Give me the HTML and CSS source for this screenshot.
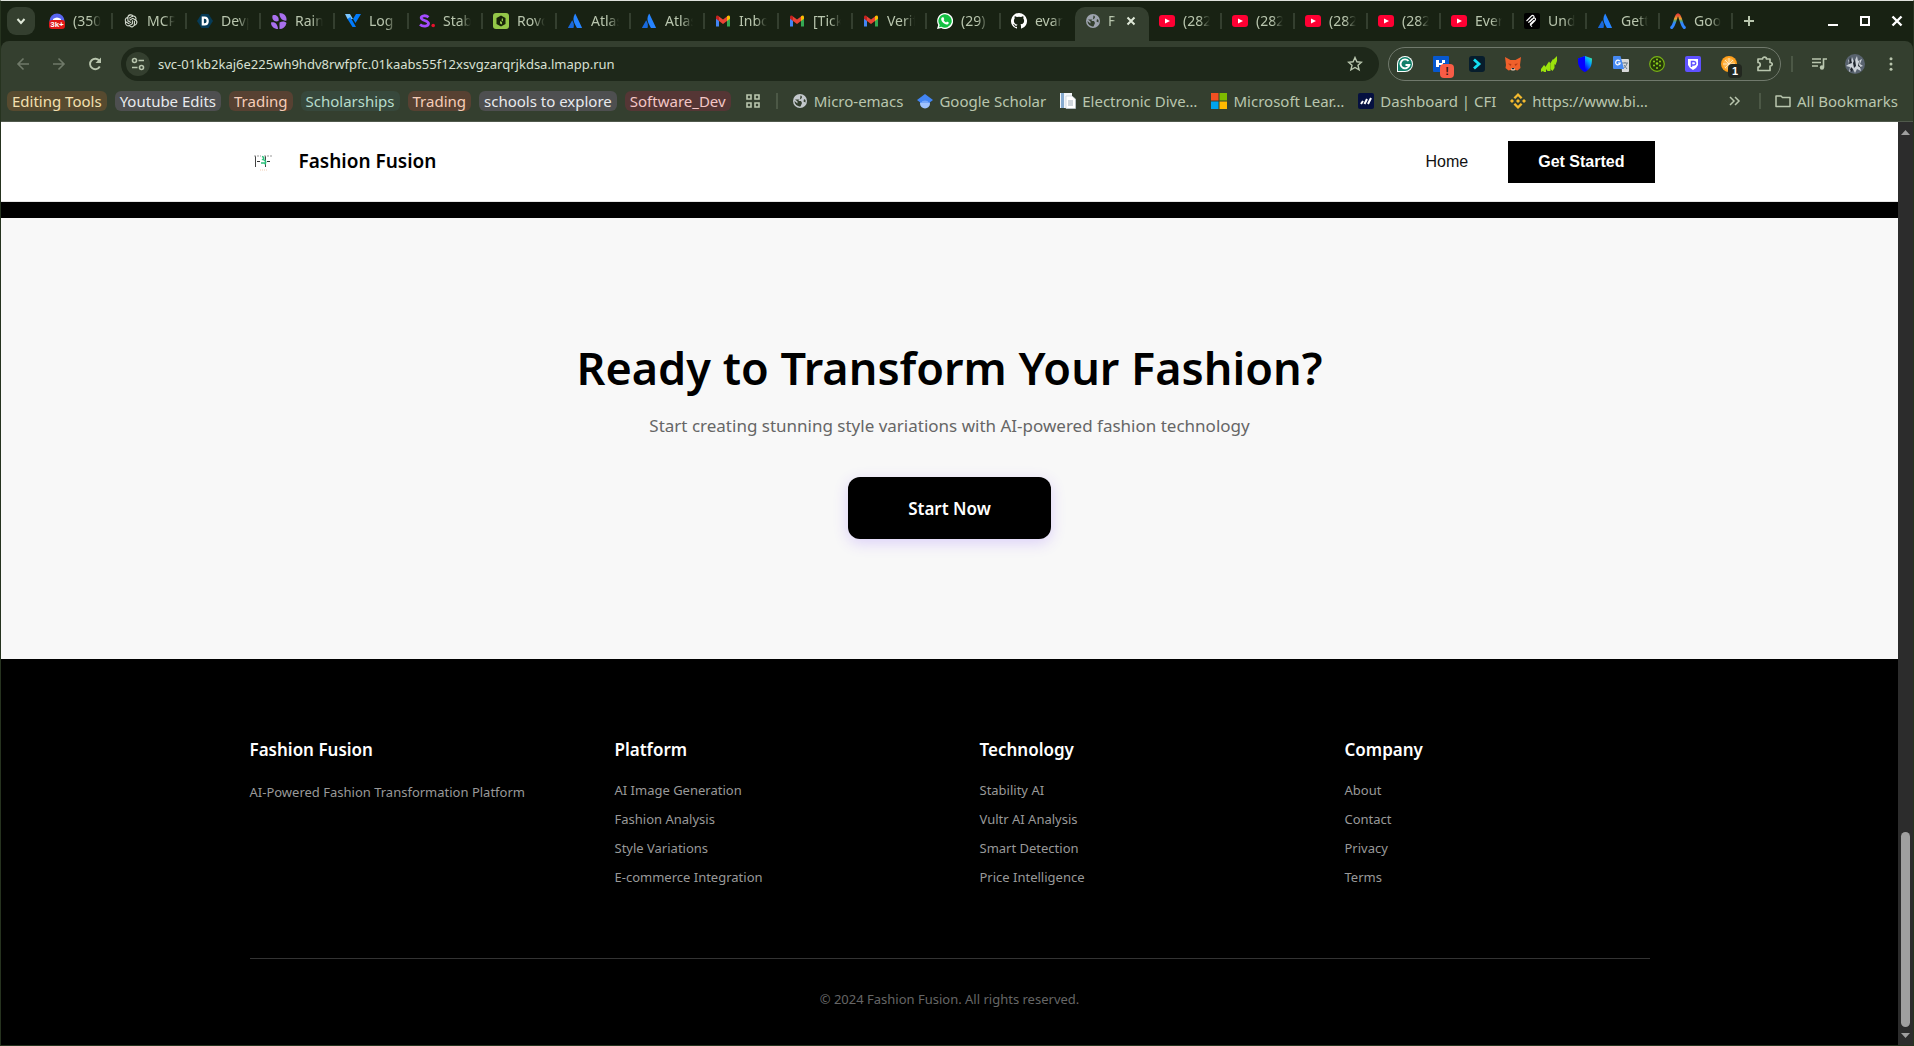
FILE: index.html
```html
<!DOCTYPE html>
<html lang="en">
<head>
<meta charset="utf-8">
<meta name="viewport" content="width=device-width, initial-scale=1">
<title>Fashion Fusion</title>
<link rel="stylesheet" href="styles.css">
</head>
<body>
<svg class="sprite" aria-hidden="true">
  <symbol id="atlassian" viewBox="0 0 16 16"><path fill="#1868db" d="M5.200 7.200 1.100 14.400c-.2.4 0 .7.4.7h5c.8-2.600.5-5.500-1.300-7.900z"/><path fill="#2684ff" d="M8 .8C5.800 4.500 6.200 7.600 7.600 10.400l2.200 4.300c.1.300.4.400.6.400h4.100c.4 0 .6-.3.4-.7L8.500.9C8.300.6 8.100.6 8 .8z"/></symbol>
  <symbol id="gmail" viewBox="0 0 16 16"><path fill="#4285f4" d="M1 4v9.500h3V7z"/><path fill="#34a853" d="M12 7v6.500h3V4z"/><path fill="#ea4335" d="m4 3.500 4 3 4-3V8l-4 3-4-3z"/><path fill="#c5221f" d="M1 4c0-1.900 1.800-2 3-.8V8L1 5.700z"/><path fill="#fbbc04" d="M15 4c0-1.900-1.800-2-3-.8V8l3-2.300z"/></symbol>
  <symbol id="youtube" viewBox="0 0 16 16"><rect y="2" width="16" height="12" rx="3" fill="#ff0033"/><path fill="#fff" d="m6 5.500 5 2.500-5 2.500z"/></symbol>
  <symbol id="globe" viewBox="0 0 16 16"><circle cx="8" cy="8" r="7" fill="currentColor"/><path fill="#343f2f" d="M8.500 2.500c1 .3 1.500 1 1.500 1.800L9 6 7 6.500 6.500 8H9l1 2-1.500 3.500C5 13.500 2.500 11 2.500 8l3 2.500V8.500L3 6.500l5 .0zM12 6l1.500 1v2.500L11.500 8.500z"/></symbol>
</svg>

<div class="browser">
  <header class="chrome">
    <div class="tabstrip">
      <button class="tab-search" aria-label="Search tabs"><svg viewBox="0 0 16 16"><path d="m4.500 6 3.500 4 3.500-4" fill="none" stroke="currentColor" stroke-width="2"/></svg></button>
      <nav class="tabs" aria-label="Open tabs">
        <a class="tab" href="#"><svg viewBox="0 0 16 16"><circle cx="8" cy="8" r="7.500" fill="#5865f2"/><path fill="#fff" d="M4 6q4-3 8 0v2H4z"/><rect y="7" width="16" height="9" rx="3" fill="#e01818"/><text x="8" y="14" text-anchor="middle" class="count">3k+</text></svg><span>(350)</span></a>
        <a class="tab" href="#"><svg viewBox="-1 -1 18 18"><g fill="none" stroke="#d8dfd4" stroke-width="1.200"><path id="petal" d="M8 9.800 4.500 7.800V4.200C4.500 .5 9.500 .2 10.300 2.800M4.600 3.800C.8 4.400 .8 8.200 2.900 9.500L6.300 11.400"/><use href="#petal" transform="rotate(120 8 8)"/><use href="#petal" transform="rotate(240 8 8)"/></g></svg><span>MCP</span></a>
        <a class="tab" href="#"><svg viewBox="0 0 16 16"><path fill="#063b57" d="M4.500 1h7L16 8l-4.500 7h-7L0 8z"/><path fill="none" stroke="#fff" stroke-width="2.200" d="M5.800 4.600h1.700c2.100 0 3.200 1.200 3.200 3.400s-1.100 3.400-3.200 3.400H5.800z"/></svg><span>Devpost</span></a>
        <a class="tab" href="#"><svg viewBox="0 0 16 16" fill="#a970ee"><path d="M1.500 2.500C5 1 8.500 4 7.500 8 4 9.500.5 7 1.500 2.500z"/><path d="M8.500 0C13 0 16 3 15.500 7.500 12 8.500 8 5 8.500 0z"/><path d="M0 9.500c3-1 6.500.5 7 6.500-4 0-7-2.500-7-6.500z"/><path d="M8.500 9.500c2.500-1.500 5.500-1.500 7 .5-1 4-3.500 6-7 6z"/></svg><span>Raindrop</span></a>
        <a class="tab" href="#"><svg viewBox="0 0 16 16"><path fill="#7cc7ff" d="M0 1h5l3 5H2.500z"/><path fill="#007bfc" d="m2.500 6 2.800-2L11 14H7.500zM11 1h5l-5.500 9L8 6z"/></svg><span>Log i</span></a>
        <a class="tab" href="#"><svg viewBox="0 0 16 16"><path fill="none" stroke="#a34bff" stroke-width="2.800" d="M9.500 4.200C7 2 2 2.400 2.200 5c.2 3 7.300 2 7.300 5.600 0 3-5.700 3.400-8.500.9"/><circle cx="14.200" cy="12.500" r="1.800" fill="#e8112d"/></svg><span>Stabi</span></a>
        <a class="tab" href="#"><svg viewBox="0 0 16 16"><rect width="16" height="16" rx="3" fill="#94c748"/><path fill="#172309" d="M8 2.500 12.500 5v6L8 13.500 3.500 11V5z"/><path fill="#94c748" d="M7 5v3l2 1v2.500l-2-1v-2zm2 0 1 1v2.500L8.500 7.500z"/></svg><span>Rovo</span></a>
        <a class="tab" href="#"><svg><use href="#atlassian"/></svg><span>Atlas</span></a>
        <a class="tab" href="#"><svg><use href="#atlassian"/></svg><span>Atlas</span></a>
        <a class="tab" href="#"><svg><use href="#gmail"/></svg><span>Inbox</span></a>
        <a class="tab" href="#"><svg><use href="#gmail"/></svg><span>[Tick</span></a>
        <a class="tab" href="#"><svg><use href="#gmail"/></svg><span>Verify</span></a>
        <a class="tab" href="#"><svg viewBox="0 0 16 16"><path fill="#fff" d="M8 0a8 8 0 1 1-3.800 15L0 16l1.200-4A8 8 0 0 1 8 0z"/><path fill="#13c143" d="M8 1.300a6.700 6.700 0 1 1-3.500 12.400L2 14.300l.7-2.400A6.700 6.700 0 0 1 8 1.300z"/><path fill="#fff" d="M5.500 4.300h1l.8 1.900-.7.900c.6 1.200 1.400 1.900 2.500 2.300l.9-.9 1.800.9c0 1.500-1 2-2.100 2-2.800-.3-5.500-3-5.500-5.200 0-.8.500-1.600 1.300-1.900z"/></svg><span>(29)</span></a>
        <a class="tab" href="#"><svg viewBox="0 0 16 16"><path fill="#fff" d="M8 0a8 8 0 0 0-2.500 15.600c.4.100.5-.2.500-.4v-1.400c-2.200.5-2.700-1-2.700-1-.4-.9-.9-1.200-.9-1.200-.7-.5.100-.5.100-.5.800.1 1.200.8 1.200.8.700 1.200 1.900.9 2.300.7.100-.5.300-.9.500-1.100-1.800-.2-3.600-.9-3.600-4 0-.8.300-1.500.8-2.100 0-.2-.4-1 .1-2.100 0 0 .7-.2 2.200.8a8 8 0 0 1 4 0c1.500-1 2.200-.8 2.200-.8.500 1.100.1 1.900.1 2.100.5.600.8 1.300.8 2.100 0 3.100-1.900 3.700-3.700 4 .3.200.6.700.6 1.400v2.300c0 .2.100.5.500.4A8 8 0 0 0 8 0z"/></svg><span>evans</span></a>
        <a class="tab active" href="#" aria-current="page"><svg class="globe"><use href="#globe"/></svg><span>Fa</span><svg class="close" viewBox="0 0 16 16"><path d="m4.500 4.500 7 7m0-7-7 7" stroke="currentColor" stroke-width="2"/></svg></a>
        <a class="tab" href="#"><svg><use href="#youtube"/></svg><span>(282)</span></a>
        <a class="tab" href="#"><svg><use href="#youtube"/></svg><span>(282)</span></a>
        <a class="tab" href="#"><svg><use href="#youtube"/></svg><span>(282)</span></a>
        <a class="tab" href="#"><svg><use href="#youtube"/></svg><span>(282)</span></a>
        <a class="tab" href="#"><svg><use href="#youtube"/></svg><span>Every</span></a>
        <a class="tab" href="#"><svg viewBox="0 0 16 16"><rect width="16" height="16" rx="2" fill="#000"/><g fill="none" stroke="#fff" stroke-width="1.100"><path d="m2.500 8 5-5c1.500-1.500 3.500.5 2 2l-4 4m3.500-3.500c1.500-1.500 3.500.5 2 2l-4.500 4.500 1.500 1.700M4.300 9.700l4-4M6 11.500l4-4"/></g></svg><span>Under</span></a>
        <a class="tab" href="#"><svg><use href="#atlassian"/></svg><span>Getti</span></a>
        <a class="tab" href="#"><svg viewBox="0 0 16 16"><defs><linearGradient id="peak" x1="0" y1="0" x2="0" y2="1"><stop offset="0" stop-color="#ea4335"/><stop offset=".3" stop-color="#f0a030"/><stop offset=".48" stop-color="#50a878"/><stop offset=".65" stop-color="#3186ff"/></linearGradient></defs><path fill="none" stroke="url(#peak)" stroke-width="3" stroke-linecap="round" d="M1.700 14.500C5 12 5.500 1.700 8 1.700s3 10.300 6.300 12.800"/></svg><span>Goog</span></a>
      </nav>
      <button class="new-tab" aria-label="New tab"><svg viewBox="0 0 16 16"><path d="M8 3v10M3 8h10" stroke="currentColor" stroke-width="2"/></svg></button>
      <div class="window-controls">
        <button aria-label="Minimize"><svg viewBox="0 0 16 16"><path d="M3 12h10" stroke="currentColor" stroke-width="2"/></svg></button>
        <button aria-label="Maximize"><svg viewBox="0 0 16 16"><rect x="4" y="4" width="8" height="8" fill="none" stroke="currentColor" stroke-width="2"/></svg></button>
        <button aria-label="Close window"><svg viewBox="0 0 16 16"><path d="m3.500 3.500 9 9m0-9-9 9" stroke="currentColor" stroke-width="2.400"/></svg></button>
      </div>
    </div>

    <div class="toolbar">
      <div class="history">
        <button class="dim" aria-label="Back"><svg viewBox="0 0 16 16"><path d="M14 8H3m5.500-5.500L3 8l5.500 5.500" fill="none" stroke="currentColor" stroke-width="1.600"/></svg></button>
        <button class="dim" aria-label="Forward"><svg viewBox="0 0 16 16"><path d="M2 8h11M7.500 2.500 13 8l-5.500 5.500" fill="none" stroke="currentColor" stroke-width="1.600"/></svg></button>
        <button aria-label="Reload"><svg viewBox="0 0 16 16"><path d="M12.800 10.500A5.200 5.200 0 1 1 12.500 5" fill="none" stroke="currentColor" stroke-width="1.900"/><path fill="currentColor" d="M14 1.500V7H8.500z"/></svg></button>
      </div>
      <div class="omnibox">
        <button class="site-info" aria-label="Site information"><svg viewBox="0 0 16 16" fill="none" stroke="currentColor" stroke-width="1.600"><circle cx="4.500" cy="4.500" r="2"/><circle cx="11.500" cy="11.500" r="2"/><path d="M8.500 4.500H14M2 11.500h5.500"/></svg></button>
        <input type="text" aria-label="Address" value="svc-01kb2kaj6e225wh9hdv8rwfpfc.01kaabs55f12xsvgzarqrjkdsa.lmapp.run">
        <button class="star" aria-label="Bookmark this tab"><svg viewBox="0 0 16 16"><path d="m8 1.500 1.900 4.300 4.600.4-3.500 3.100 1.100 4.600L8 11.500l-4.100 2.400L5 9.300 1.500 6.200l4.600-.4z" fill="none" stroke="currentColor" stroke-width="1.400"/></svg></button>
      </div>
      <div class="extensions">
        <button aria-label="Grammarly"><svg viewBox="0 0 16 16"><path fill="#fff" d="M8 0a8 8 0 1 1 0 16H0V8a8 8 0 0 1 8-8z"/><path fill="#11806a" d="M8 1a7 7 0 1 1 0 14H1V8a7 7 0 0 1 7-7z"/><path fill="none" stroke="#fff" stroke-width="1.900" d="M11.500 5A4.500 4.500 0 1 0 12.400 9H8.500"/></svg></button>
        <button class="badged" aria-label="Screen tool"><svg viewBox="0 0 16 16"><rect width="16" height="16" rx="1" fill="#0758cf"/><path fill="#fff" d="M3 4h3v3h3V4h3v3h-2v2H6v2H3z"/></svg><span class="badge alert">!</span></button>
        <button aria-label="Prompt tool"><svg viewBox="0 0 16 16"><rect width="16" height="16" rx="3" fill="#071d2c"/><path d="m5 3.500 5 4.500-5 4.500" fill="none" stroke="#13e0f2" stroke-width="2.800"/></svg></button>
        <button aria-label="MetaMask"><svg viewBox="0 0 16 16"><path fill="#f0602b" d="m0 1 5.500 3h5L16 1l-1 8 .500 3-3 2.500-2-.5h-5l-2 .5L.5 12 1 9z"/><path fill="#b83a16" d="M3 7.500 6.500 8l-1 2zm10 0L9.500 8l1 2z"/><path fill="#e8d2c0" d="M6 12h4l-.5 2.500h-3z"/><path fill="#20242b" d="M6.500 12h3l-.5 1.200H7z"/></svg></button>
        <button aria-label="Trend tool"><svg viewBox="0 0 16 16" fill="#9be20c"><path d="M0 16v-3l3-4 2 2v5H3l-1-1z"/><path d="M5 10 8 5.500l1.500 2V15h-3L5 13z"/><path d="M9.500 7 12 3l1.500 1v8l-2 3-2-2z"/><path d="m13 3 3-3v5l-1.500 4L13 8z"/></svg></button>
        <button aria-label="Wallet shield"><svg viewBox="0 0 16 16"><defs><linearGradient id="shield" x1="0" y1="1" x2="1" y2="0"><stop offset=".35" stop-color="#0500ff"/><stop offset=".7" stop-color="#00a6ff"/><stop offset="1" stop-color="#48ff91"/></linearGradient></defs><path fill="url(#shield)" d="m8 0 7 2.500c0 8-2 10.500-7 13.500-5-3-7-5.500-7-13.500z"/><path fill="#0500ff" d="m8 0-7 2.500C1 10.500 3 13 8 16z"/></svg></button>
        <button aria-label="Translate"><svg viewBox="0 0 16 16"><path fill="#d8d9da" d="M8 3h7a1 1 0 0 1 1 1v11a1 1 0 0 1-1 1H9z"/><path d="M9 7h6m-3-1v1m2 0c-.5 3-2 4-3.500 5m.5-3 3 4" stroke="#6b7d8d" fill="none"/><path fill="#4689f2" d="M1 0h6.500L11 13H1a1 1 0 0 1-1-1V1a1 1 0 0 1 1-1z"/><path fill="none" stroke="#fff" stroke-width="1.200" d="M6.700 5a2.300 2.300 0 1 0 .5 2H5"/></svg></button>
        <button aria-label="Token tool"><svg viewBox="0 0 16 16"><circle cx="8" cy="8" r="7.300" fill="#26380b" stroke="#79b415" stroke-width="1.200"/><g fill="#8cd11a"><circle cx="8" cy="3.500" r="1"/><circle cx="5" cy="5.500" r="1"/><circle cx="11" cy="5.500" r="1"/><circle cx="8" cy="7.500" r="1.300"/><circle cx="5" cy="9.500" r="1"/><circle cx="11" cy="9.500" r="1"/><circle cx="8" cy="12" r="1"/></g></svg></button>
        <button aria-label="Password tool"><svg viewBox="0 0 16 16"><rect width="16" height="16" rx="2" fill="#5f51ff"/><path fill="#fff" d="M3 3h10v6l-2 3-3 2-3-2-2-3z"/><path fill="none" stroke="#5f51ff" stroke-width="1.500" d="M6.500 11V5.500H9a1.500 1.500 0 0 1 0 3.500H7"/></svg></button>
        <button class="badged" aria-label="Cookie tool"><svg viewBox="0 0 16 16"><circle cx="8" cy="8" r="8" fill="#ff9f1c"/><circle cx="8" cy="8" r="6" fill="#ffb84d"/><path d="M8 2v12M2 8h12M4 4l8 8m0-8-8 8" stroke="#fff0d5" stroke-width=".8"/></svg><span class="badge number">1</span></button>
        <button aria-label="Extensions"><svg viewBox="0 0 16 16"><path d="M1 3h4.500c0-2.500 4-2.500 4 0H13v3.500c3 0 3 3.500 0 3.500v4.500H1V11c3 0 3-4.500 0-4.500z" fill="none" stroke="currentColor" stroke-width="1.700" stroke-linejoin="round"/></svg></button>
      </div>
      <span class="divider"></span>
      <div class="profile">
        <button aria-label="Media controls"><svg viewBox="0 0 16 16"><path d="M1 3h9M1 6.500h9M1 10h6" stroke="currentColor" stroke-width="1.600"/><path d="M12.500 11V3H16" fill="none" stroke="currentColor" stroke-width="1.600"/><circle cx="11" cy="11.500" r="2.200" fill="currentColor"/></svg></button>
        <button aria-label="Profile"><svg class="avatar" viewBox="0 0 20 20"><circle cx="10" cy="10" r="10" fill="#59636f"/><path fill="#ccd2d8" d="m3 5 3 4 1-6 2 5 3-6 1 5 4-2-2 5 3 2-3 1 1 4-4-2-2 4-2-4-4 3 1-5-4-1 3-2z"/><path fill="#20262e" d="m5 3 2 6-3 1zm5 2 1 7-2 2-1-5zm5-1-1 7 2 3-3-2zM6 13l2 2-1 3-2-2z"/></svg></button>
        <button aria-label="Menu"><svg viewBox="0 0 16 16" fill="currentColor"><circle cx="8" cy="2.800" r="1.500"/><circle cx="8" cy="8" r="1.500"/><circle cx="8" cy="13.200" r="1.500"/></svg></button>
      </div>
    </div>

    <nav class="bookmarks" aria-label="Bookmarks">
      <div class="groups">
        <button class="chip sand">Editing Tools</button>
        <button class="chip grey">Youtube Edits</button>
        <button class="chip orange">Trading</button>
        <button class="chip teal">Scholarships</button>
        <button class="chip orange">Trading</button>
        <button class="chip grey">schools to explore</button>
        <button class="chip red">Software_Dev</button>
      </div>
      <button class="apps" aria-label="Apps"><svg viewBox="0 0 16 16" fill="none" stroke="currentColor" stroke-width="1.600"><path d="M2 2h4v4H2zm8 0h4v4h-4zm-8 8h4v4H2zm8 0h4v4h-4z"/></svg></button>
      <span class="divider"></span>
      <div class="links">
        <a href="#"><svg class="globe light"><use href="#globe"/></svg><span>Micro-emacs</span></a>
        <a href="#"><svg viewBox="0 0 16 16"><circle cx="8" cy="10.500" r="5" fill="#a0c3ff"/><path fill="#4285f4" d="m8 1 8 6-4 3a5 5 0 0 0-8 0L0 7z"/><path fill="#76a7fa" d="M4 10a4.500 4.500 0 0 1 8 0z"/></svg><span>Google Scholar</span></a>
        <a href="#"><svg viewBox="0 0 16 16"><path fill="#f2f5f8" d="M0 0h12v15H0z"/><path fill="#85aacf" d="M1 0h3v15H1z"/><path fill="#fff" stroke="#c3cdd6" stroke-width=".7" d="M6 3h6l3.500 3v9.500H6z"/><path stroke="#9faebb" d="M8 8h5m-5 2h5m-5 2h5"/></svg><span>Electronic Dive…</span></a>
        <a href="#"><svg viewBox="0 0 16 16"><path fill="#f25022" d="M0 0h7.500v7.500H0z"/><path fill="#7fba00" d="M8.500 0H16v7.500H8.500z"/><path fill="#00a4ef" d="M0 8.500h7.500V16H0z"/><path fill="#ffb900" d="M8.500 8.500H16V16H8.500z"/></svg><span>Microsoft Lear…</span></a>
        <a href="#"><svg viewBox="0 0 16 16"><rect width="16" height="16" rx="2" fill="#051040"/><path stroke="#fff" stroke-width="2" d="m3 11 2-3m1.500 3L9 6m1 5 3-6"/></svg><span>Dashboard | CFI</span></a>
        <a href="#"><svg viewBox="0 0 16 16" fill="#f3ba2f"><path d="m8 0 4.500 4.500L10.800 6 8 3.300 5.200 6 3.500 4.500zM8 16l-4.500-4.500L5.200 10 8 12.700l2.800-2.700 1.700 1.500zM0 8l2-2 2 2-2 2zm12 0 2-2 2 2-2 2zM8 6l2 2-2 2-2-2z"/></svg><span>https://www.bi…</span></a>
      </div>
      <button class="overflow" aria-label="More bookmarks"><svg viewBox="0 0 16 16"><path d="m3 4 4 4-4 4m5-8 4 4-4 4" fill="none" stroke="currentColor" stroke-width="1.500"/></svg></button>
      <span class="divider"></span>
      <a class="all" href="#"><svg viewBox="0 0 16 16"><path d="M1 3h5l1.500 1.500H15v9H1z" fill="none" stroke="currentColor" stroke-width="1.500" stroke-linejoin="round"/></svg><span>All Bookmarks</span></a>
    </nav>
  </header>

  <div class="viewport">
    <div class="site">
      <header class="site-nav">
        <div class="nav-inner">
          <a class="brand" href="#"><svg viewBox="0 0 20 18"><g fill="none"><path d="M2.500 3v11M12.500 3v11" stroke="#444"/><path d="M1 3h7M11 3h8" stroke="#999" stroke-dasharray="2 1"/><path d="M4 8.500h3M14 8.500h3" stroke="#333" stroke-width="1.200"/><path d="M9 3.500q3 1 1 3 4 1 2 5M8 10h5" stroke="#2bc07a" stroke-width="1.600"/><path d="M7 17h8" stroke="#f1cdb4" stroke-dasharray="1 1"/></g></svg><span>Fashion Fusion</span></a>
          <nav class="nav-links"><a href="#">Home</a><button>Get Started</button></nav>
        </div>
      </header>
      <div class="previous"></div>
      <main class="cta">
        <h1>Ready to Transform Your Fashion?</h1>
        <p>Start creating stunning style variations with AI-powered fashion technology</p>
        <button>Start Now</button>
      </main>
      <footer class="footer">
        <div class="footer-inner">
          <div class="columns">
            <section><h2>Fashion Fusion</h2><p>AI-Powered Fashion Transformation Platform</p></section>
            <section><h2>Platform</h2><ul><li><a href="#">AI Image Generation</a></li><li><a href="#">Fashion Analysis</a></li><li><a href="#">Style Variations</a></li><li><a href="#">E-commerce Integration</a></li></ul></section>
            <section><h2>Technology</h2><ul><li><a href="#">Stability AI</a></li><li><a href="#">Vultr AI Analysis</a></li><li><a href="#">Smart Detection</a></li><li><a href="#">Price Intelligence</a></li></ul></section>
            <section><h2>Company</h2><ul><li><a href="#">About</a></li><li><a href="#">Contact</a></li><li><a href="#">Privacy</a></li><li><a href="#">Terms</a></li></ul></section>
          </div>
          <p class="copyright">© 2024 Fashion Fusion. All rights reserved.</p>
        </div>
      </footer>
    </div>
    <div class="scrollbar" aria-hidden="true">
      <svg viewBox="0 0 9 5"><path d="M0 5 4.500 0 9 5z"/></svg>
      <div class="track"><div class="thumb"></div></div>
      <svg viewBox="0 0 9 5"><path d="m0 0 4.500 5L9 0z"/></svg>
    </div>
  </div>
</div>
</body>
</html>
```

FILE: styles.css
```css
* { box-sizing: border-box; }

body {
  margin: 0;
  background: #182213;
  font-family: "Noto Sans", "Open Sans", sans-serif;
}

a { color: inherit; text-decoration: none; }
button { border: 0; padding: 0; background: none; color: inherit; font: inherit; cursor: pointer; }
h1, h2, p, ul { margin: 0; padding: 0; }
ul { list-style: none; }
svg { display: block; width: 16px; height: 16px; flex: none; }
.sprite { position: absolute; width: 0; height: 0; }

.browser {
  display: flex;
  flex-direction: column;
  min-height: 100vh;
  border: 1px solid #26331f;
  border-top-color: #dfe2dd;
}

/* Tab strip */
.chrome { color: #b9c6ae; font-size: 15px; }
.tabstrip {
  display: flex;
  align-items: center;
  height: 40px;
  padding: 0 8px 0 6px;
  background: #182213;
}
.tab-search {
  display: grid;
  place-items: center;
  width: 28px;
  height: 28px;
  margin-right: 4px;
  border-radius: 9px;
  background: #343f2f;
  color: #dfe8d8;
}
.tabs { display: flex; align-items: center; height: 100%; font-size: 14px; }
.tab {
  display: flex;
  align-items: center;
  gap: 8px;
  width: 74px;
  height: 16px;
  padding: 0 10px;
  border-right: 2px solid #343f2f;
  line-height: 20px;
}
.tab span {
  flex: 1;
  min-width: 0;
  overflow: hidden;
  white-space: nowrap;
  mask-image: linear-gradient(90deg, #000 60%, transparent);
}
.tab.active ~ .tab { width: 73px; }
.tab:has(+ .active) { border-color: transparent; }
.tab.active {
  gap: 7px;
  align-self: flex-end;
  height: 34px;
  padding: 0 10px 6px 10px;
  border: 0;
  border-radius: 10px 10px 0 0;
  background: #343f2f;
}
.globe { color: #9da3ae; }
.globe.light { color: #c3c8cc; }
.close { color: #dfe8d8; }
.count { fill: #fff; font: bold 8px "Liberation Sans", sans-serif; }
.new-tab { margin-left: 8px; }
.window-controls { display: flex; gap: 16px; margin-left: auto; color: #fff; }

/* Toolbar */
.toolbar {
  display: flex;
  align-items: center;
  height: 46px;
  padding: 0 14px;
  border-radius: 8px 8px 0 0;
  background: #343f2f;
}
.history { display: flex; gap: 20px; margin-right: 18px; }
.dim { color: #6f7969; }
.omnibox {
  display: flex;
  align-items: center;
  flex: 1;
  height: 34px;
  padding: 0 16px 0 5px;
  border-radius: 17px;
  background: #1e281a;
}
.site-info {
  display: grid;
  place-items: center;
  width: 24px;
  height: 24px;
  border-radius: 50%;
  background: #343f2f;
}
.omnibox input {
  flex: 1;
  min-width: 0;
  margin: 0 8px;
  padding: 0;
  border: 0;
  outline: 0;
  background: none;
  color: #d9e0d3;
  font: 13px "Noto Sans", sans-serif;
}
.extensions {
  display: flex;
  gap: 20px;
  align-items: center;
  height: 34px;
  margin-left: 9px;
  padding: 0 7px 0 8px;
  border: 1px solid #70796c;
  border-radius: 17px;
}
.badged { position: relative; }
.badge {
  position: absolute;
  left: 7px;
  top: 8px;
  width: 14px;
  height: 14px;
  border-radius: 4px;
  font: bold 11px/14px "Liberation Sans", sans-serif;
  text-align: center;
}
.badge.alert { background: #f85c46; color: #331510; }
.badge.number { background: #22271f; color: #fff; }
.divider { width: 2px; height: 16px; background: #4c5846; }
.toolbar .divider { margin: 0 18px 0 10px; }
.profile { display: flex; align-items: center; gap: 18px; }
.profile .avatar { width: 20px; height: 20px; }

/* Bookmarks bar */
.bookmarks {
  display: flex;
  align-items: center;
  height: 35px;
  padding: 0 15px 6px 6px;
  border-bottom: 1px solid #50594c;
  background: #343f2f;
  line-height: 20px;
  white-space: nowrap;
}
.groups { display: flex; gap: 8px; }
.chip { height: 20px; padding: 0 5px; border-radius: 6px; }
.sand { background: #574a2f; color: #f3e0b0; }
.grey { background: #4e4f50; color: #e8eaed; }
.orange { background: #574132; color: #f5cdb8; }
.teal { background: #37483c; color: #b7dccb; }
.red { background: #553635; color: #f3c6c6; }
.apps { margin: 0 15px 0 14px; }
.links { display: flex; gap: 14px; margin-left: 14px; }
.links a, .all { display: flex; align-items: center; gap: 6px; }
.overflow { margin: 0 16px 0 auto; }
.all { margin-left: 14px; }

/* Page area */
.viewport { display: flex; flex: 1; }
.site {
  display: flex;
  flex: 1;
  flex-direction: column;
  min-width: 0;
  background: #f8f8f8;
}
.site-nav { padding: 18px 24px; border-bottom: 1px solid #e5e5e5; background: #fff; }
.nav-inner {
  display: flex;
  align-items: center;
  justify-content: space-between;
  max-width: 1410px;
  margin: 0 auto;
  padding-left: 8px;
}
.brand {
  display: flex;
  align-items: center;
  gap: 26px;
  color: #000;
  font-size: 19px;
  font-weight: 600;
  line-height: 43px;
}
.brand svg { width: 20px; height: 18px; }
.nav-links {
  display: flex;
  align-items: center;
  gap: 40px;
  color: #111;
  font: 16px "Liberation Sans", Arial, sans-serif;
}
.nav-links button {
  height: 42px;
  padding: 0 30px;
  background: #000;
  color: #fff;
  font-weight: 700;
}
.previous { height: 16px; background: #000; }

.cta {
  display: flex;
  flex-direction: column;
  align-items: center;
  padding: 120px 24px;
  text-align: center;
}
.cta h1 { color: #000; font-size: 45px; font-weight: 600; line-height: 60px; }
.cta p { margin: 15px 0 38px; color: #666; font-size: 17px; line-height: 26px; }
.cta button {
  height: 62px;
  padding: 0 60px;
  border-radius: 12px;
  background: #000;
  box-shadow: 0 4px 15px rgba(112, 51, 255, .2);
  color: #fff;
  font-size: 17px;
  font-weight: 600;
}

.footer { flex: 1; padding: 80px 24px 24px; background: #000; color: #999; font-size: 13px; }
.footer-inner { max-width: 1400px; margin: 0 auto; }
.columns {
  display: grid;
  grid-template-columns: repeat(4, 1fr);
  gap: 60px;
  padding-bottom: 64px;
  border-bottom: 1px solid #333;
}
.footer h2 { margin-bottom: 17px; color: #fff; font-size: 17px; font-weight: 600; line-height: 22px; }
.footer section p { line-height: 28px; }
.footer li { margin-bottom: 5px; line-height: 24px; }
.copyright { padding-top: 30px; color: #666; line-height: 20px; text-align: center; }

.scrollbar {
  display: flex;
  flex-direction: column;
  align-items: center;
  width: 15px;
  padding: 8px 0 7px;
  background: #2c2c2c;
}
.scrollbar svg { width: 9px; height: 5px; fill: #9f9f9f; }
.track { display: flex; flex: 1; flex-direction: column; justify-content: flex-end; padding: 6px 0; }
.thumb { width: 9px; height: 22%; border-radius: 5px; background: #9f9f9f; }
```
